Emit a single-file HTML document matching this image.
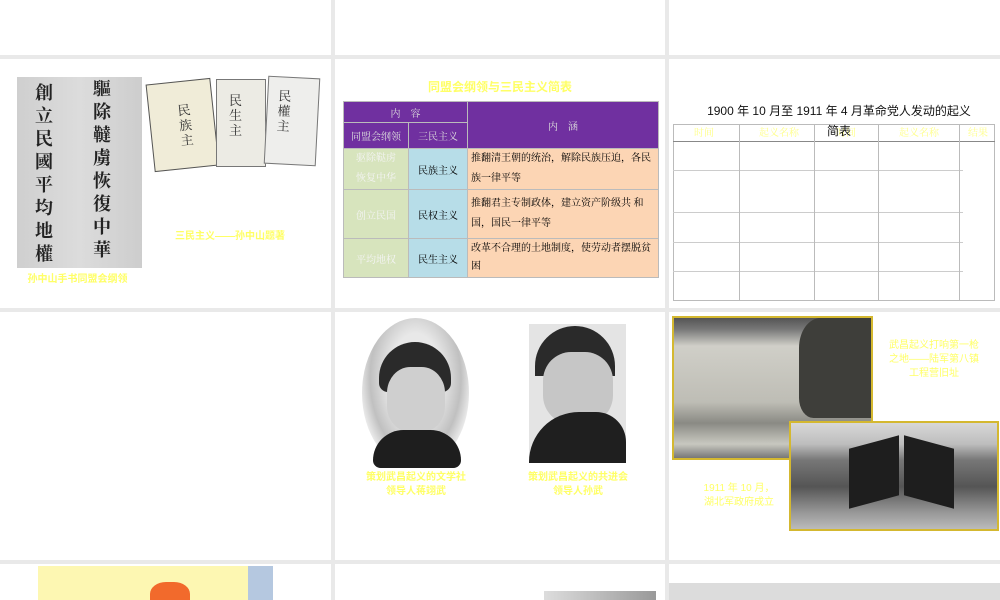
<!DOCTYPE html>
<html><head><meta charset="utf-8"><style>
*{margin:0;padding:0;box-sizing:border-box}
body{width:1000px;height:600px;background:#e9e9e9;position:relative;overflow:hidden;font-family:"Liberation Sans","Noto Sans CJK SC",sans-serif}
.t{position:absolute;background:#fff;overflow:hidden}
.a{position:absolute}
.y{color:#ffff66;font-size:10px;white-space:nowrap;text-align:center;line-height:14px;font-weight:bold}
table{border-collapse:collapse}
.tb td{border:1px solid #bbb;font-family:"Liberation Serif","Noto Serif CJK SC",serif;font-size:10px;padding:0 3px}
</style></head><body>
<div class="t" style="left:0;top:0;width:331px;height:55px"></div>
<div class="t" style="left:335px;top:0;width:330px;height:55px"></div>
<div class="t" style="left:669px;top:0;width:331px;height:55px"></div>

<!-- row2 left -->
<div class="t" style="left:0;top:59px;width:331px;height:249px">
 <div class="a" style="left:17px;top:18px;width:125px;height:191px;overflow:hidden;background:linear-gradient(90deg,#cfcfcf,#dcdcdc 50%,#cdcdcd);font-family:'Noto Serif CJK SC',serif;color:#222;font-size:18px;line-height:23px;font-weight:bold">
  <div class="a" style="left:76px;top:0px;width:20px">驅除韃虜恢復中華</div>
  <div class="a" style="left:18px;top:4px;width:20px">創立民國平均地權</div>
 </div>
 <div class="a y" style="left:0;top:214px;width:155px">孙中山手书同盟会纲领</div>
 <div class="a" style="left:150px;top:22px;width:65px;height:88px;background:#f0ecd8;border:1px solid #555;transform:rotate(-6deg);font-family:'Noto Serif CJK SC',serif;font-size:13px;line-height:15px;padding:20px 0 0 28px;color:#333">民<br>族<br>主</div>
 <div class="a" style="left:216px;top:20px;width:50px;height:88px;background:#ecebe4;border:1px solid #777;font-family:'Noto Serif CJK SC',serif;font-size:13px;line-height:15px;padding:12px 0 0 12px;color:#333">民<br>生<br>主</div>
 <div class="a" style="left:266px;top:18px;width:52px;height:88px;background:#eeeeec;border:1px solid #777;transform:rotate(3deg);font-family:'Noto Serif CJK SC',serif;font-size:13px;line-height:15px;padding:10px 0 0 10px;color:#333">民<br>權<br>主</div>
 <div class="a y" style="left:160px;top:171px;width:140px">三民主义——孙中山题著</div>
</div>

<!-- row2 middle -->
<div class="t" style="left:335px;top:59px;width:330px;height:249px">
 <div class="a y" style="left:0;top:21px;width:330px;font-size:12px">同盟会纲领与三民主义简表</div>
 <table class="tb a" style="left:8px;top:42px;width:316px">
  <tr style="height:21px;background:#7030a0;color:#ddd"><td colspan="2" style="text-align:center;width:124px">内　容</td><td rowspan="2" style="text-align:center">内　涵</td></tr>
  <tr style="height:26px;background:#7030a0;color:#ddd"><td style="width:65px;text-align:center">同盟会纲领</td><td style="width:59px;text-align:center">三民主义</td></tr>
  <tr style="height:40px"><td style="background:#d7e4bd;color:#f4f4f4;text-align:center;line-height:20px">驱除鞑虏<br>恢复中华</td><td style="background:#b7dde8;text-align:center">民族主义</td><td style="background:#fcd5b4;line-height:20px">推翻清王朝的统治，解除民族压迫，各民族一律平等</td></tr>
  <tr style="height:49px"><td style="background:#d7e4bd;color:#f4f4f4;text-align:center">创立民国</td><td style="background:#b7dde8;text-align:center">民权主义</td><td style="background:#fcd5b4;line-height:20px">推翻君主专制政体，建立资产阶级共 和国，国民一律平等</td></tr>
  <tr style="height:39px"><td style="background:#d7e4bd;color:#f4f4f4;text-align:center">平均地权</td><td style="background:#b7dde8;text-align:center">民生主义</td><td style="background:#fcd5b4;line-height:18px">改革不合理的土地制度，使劳动者摆脱贫困</td></tr>
 </table>
</div>

<!-- row2 right -->
<div class="t" style="left:669px;top:59px;width:331px;height:249px">
 <div class="a" style="left:4px;top:65px;width:322px;height:177px;border:1px solid #bbb"></div>
 <div class="a" style="left:4px;top:111px;width:290px;border-top:1px solid #ccc"></div>
 <div class="a" style="left:4px;top:153px;width:290px;border-top:1px solid #ccc"></div>
 <div class="a" style="left:4px;top:183px;width:290px;border-top:1px solid #ccc"></div>
 <div class="a" style="left:4px;top:212px;width:290px;border-top:1px solid #ccc"></div>
 <div class="a" style="left:4px;top:82px;width:322px;border-top:1px solid #888"></div>
 <div class="a" style="left:70px;top:65px;height:177px;border-left:1px solid #bbb"></div>
 <div class="a" style="left:145px;top:65px;height:177px;border-left:1px solid #bbb"></div>
 <div class="a" style="left:209px;top:65px;height:177px;border-left:1px solid #bbb"></div>
 <div class="a" style="left:290px;top:65px;height:177px;border-left:1px solid #bbb"></div>
 <div class="a y" style="left:15px;top:66px;width:40px;font-weight:normal;font-family:'Noto Serif CJK SC',serif;color:#ffff88">时间</div>
 <div class="a y" style="left:80px;top:66px;width:60px;font-weight:normal;font-family:'Noto Serif CJK SC',serif;color:#ffff88">起义名称</div>
 <div class="a y" style="left:157px;top:66px;width:40px;font-weight:normal;font-family:'Noto Serif CJK SC',serif;color:#ffff88">时间</div>
 <div class="a y" style="left:220px;top:66px;width:60px;font-weight:normal;font-family:'Noto Serif CJK SC',serif;color:#ffff88">起义名称</div>
 <div class="a y" style="left:292px;top:66px;width:34px;font-weight:normal;font-family:'Noto Serif CJK SC',serif;color:#ffff88">结果</div>
 <div class="a" style="left:0;top:42px;width:340px;text-align:center;font-size:12px;line-height:20px;color:#111">1900 年 10 月至 1911 年 4 月革命党人发动的起义<br>简表</div>
</div>

<!-- row3 left -->
<div class="t" style="left:0;top:312px;width:331px;height:248px"></div>

<!-- row3 middle -->
<div class="t" style="left:335px;top:312px;width:330px;height:248px">
 <div class="a" style="left:27px;top:6px;width:107px;height:150px;border-radius:50%;background:radial-gradient(ellipse at 50% 40%,#e8e8e8 0 35%,#c0c0c0 60%,#eee 75%,#fff 80%)"></div>
 <div class="a" style="left:44px;top:30px;width:72px;height:50px;border-radius:40px 40px 10px 10px;background:#2a2a2a"></div>
 <div class="a" style="left:52px;top:55px;width:58px;height:65px;border-radius:40%;background:#cfcfcf"></div>
 <div class="a" style="left:38px;top:118px;width:88px;height:38px;border-radius:40px 40px 10px 10px;background:#1e1e1e"></div>
 <div class="a" style="left:194px;top:12px;width:97px;height:139px;background:#e4e4e4"></div>
 <div class="a" style="left:200px;top:14px;width:80px;height:50px;border-radius:40px 40px 0 0;background:#2a2a2a"></div>
 <div class="a" style="left:208px;top:40px;width:70px;height:72px;border-radius:40%;background:#c6c6c6"></div>
 <div class="a" style="left:194px;top:100px;width:97px;height:51px;border-radius:50px 30px 0 0;background:#1f1f1f"></div>
 <div class="a y" style="left:0;top:159px;width:162px">策划武昌起义的文学社<br>领导人蒋翊武</div>
 <div class="a y" style="left:162px;top:159px;width:162px">策划武昌起义的共进会<br>领导人孙武</div>
</div>

<!-- row3 right -->
<div class="t" style="left:669px;top:312px;width:331px;height:248px">
 <div class="a" style="left:3px;top:4px;width:201px;height:144px;border:2px solid #d4b830;background:linear-gradient(180deg,#555 0,#777 8%,#d0cfc8 20%,#bebdb5 60%,#8a8a84 75%,#c8c8c0 90%,#777 100%)"></div>
 <div class="a" style="left:130px;top:6px;width:72px;height:100px;background:#3e3e3a;border-radius:30% 0 0 20%"></div>
 <div class="a y" style="left:205px;top:27px;width:120px;font-weight:normal">武昌起义打响第一枪<br>之地——陆军第八镇<br>工程营旧址</div>
 <div class="a" style="left:120px;top:109px;width:210px;height:110px;border:2px solid #d4b830;background:linear-gradient(180deg,#d8d8d8 0,#bdbdbd 20%,#777 35%,#555 60%,#999 85%,#bbb 100%)"></div>
 <div class="a" style="left:180px;top:130px;width:50px;height:60px;background:#1e1e1e;transform:skewY(-15deg)"></div>
 <div class="a" style="left:235px;top:130px;width:50px;height:60px;background:#1e1e1e;transform:skewY(15deg)"></div>
 <div class="a y" style="left:15px;top:170px;width:110px;font-weight:normal">1911 年 10 月，<br>湖北军政府成立</div>
</div>

<!-- row4 -->
<div class="t" style="left:0;top:564px;width:331px;height:36px">
 <div class="a" style="left:38px;top:2px;width:235px;height:40px;background:#fdf7b2"></div>
 <div class="a" style="left:150px;top:18px;width:40px;height:30px;background:#f26a2c;border-radius:40% 40% 0 0"></div>
 <div class="a" style="left:248px;top:2px;width:25px;height:40px;background:#b5c8e0"></div>
</div>
<div class="t" style="left:335px;top:564px;width:330px;height:36px">
 <div class="a" style="left:209px;top:27px;width:112px;height:20px;background:linear-gradient(90deg,#ddd,#999)"></div>
</div>
<div class="t" style="left:669px;top:564px;width:331px;height:36px">
 <div class="a" style="left:0;top:19px;width:331px;height:20px;background:#dcdcdc"></div>
</div>
</body></html>
